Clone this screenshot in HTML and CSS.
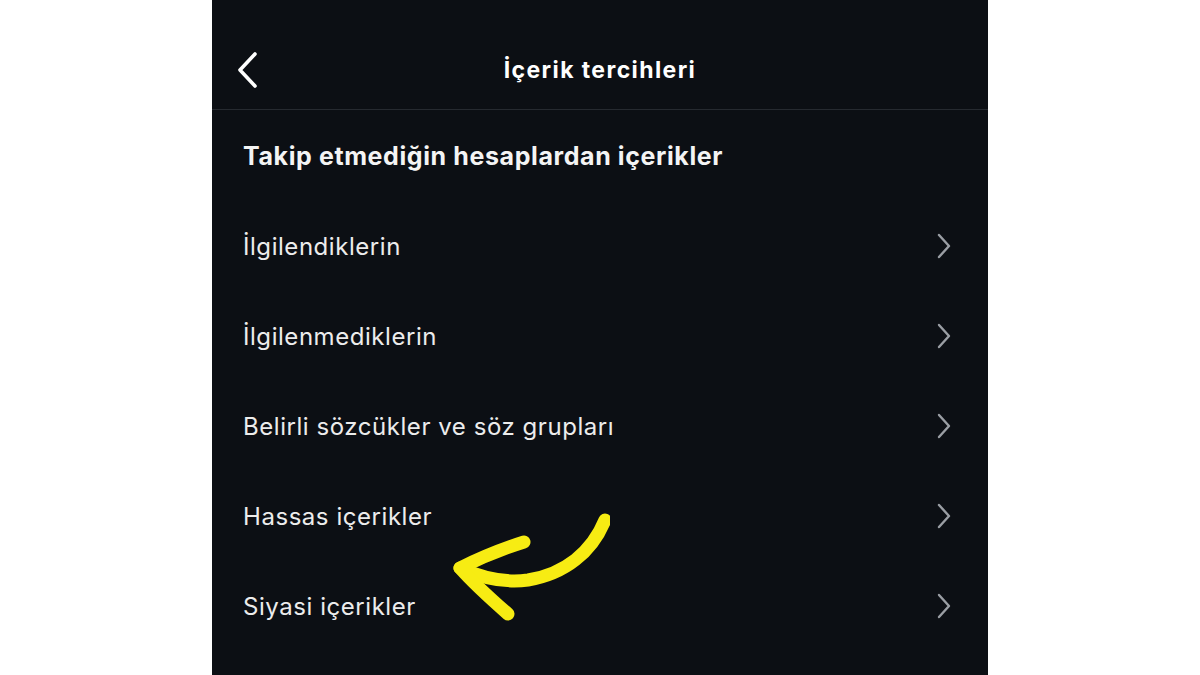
FILE: index.html
```html
<!DOCTYPE html>
<html lang="tr">
<head>
<meta charset="utf-8">
<link rel="stylesheet" href="styles.css">
</head>
<body>
<div class="page">
  <div class="phone">
    <header class="topbar">
      <svg class="back" width="26" height="40" viewBox="0 0 26 40"><path d="M20 4 L5 20 L20 36" fill="none" stroke="#fff" stroke-width="3.6" stroke-linecap="round" stroke-linejoin="round"/></svg>
      <h1 class="title">İçerik tercihleri</h1>
    </header>
    <div class="section">Takip etmediğin hesaplardan içerikler</div>
    <ul class="list">
      <li class="row"><span>İlgilendiklerin</span><svg class="chev" width="16" height="26" viewBox="0 0 16 26"><path d="M3 2 L13 13 L3 24" fill="none" stroke="#9a9ea4" stroke-width="2.4" stroke-linecap="round" stroke-linejoin="round"/></svg></li>
      <li class="row"><span>İlgilenmediklerin</span><svg class="chev" width="16" height="26" viewBox="0 0 16 26"><path d="M3 2 L13 13 L3 24" fill="none" stroke="#9a9ea4" stroke-width="2.4" stroke-linecap="round" stroke-linejoin="round"/></svg></li>
      <li class="row"><span>Belirli sözcükler ve söz grupları</span><svg class="chev" width="16" height="26" viewBox="0 0 16 26"><path d="M3 2 L13 13 L3 24" fill="none" stroke="#9a9ea4" stroke-width="2.4" stroke-linecap="round" stroke-linejoin="round"/></svg></li>
      <li class="row"><span>Hassas içerikler</span><svg class="chev" width="16" height="26" viewBox="0 0 16 26"><path d="M3 2 L13 13 L3 24" fill="none" stroke="#9a9ea4" stroke-width="2.4" stroke-linecap="round" stroke-linejoin="round"/></svg></li>
      <li class="row"><span>Siyasi içerikler</span><svg class="chev" width="16" height="26" viewBox="0 0 16 26"><path d="M3 2 L13 13 L3 24" fill="none" stroke="#9a9ea4" stroke-width="2.4" stroke-linecap="round" stroke-linejoin="round"/></svg></li>
      <li class="row"><span>Önerilen içerikler</span><svg class="chev" width="16" height="26" viewBox="0 0 16 26"><path d="M3 2 L13 13 L3 24" fill="none" stroke="#9a9ea4" stroke-width="2.4" stroke-linecap="round" stroke-linejoin="round"/></svg></li>
    </ul>
    <svg class="arrow" width="180" height="130" viewBox="430 500 180 130">
      <path d="M605 520 C592 552 565 574 528 580 C506 583 482 578 460 568" fill="none" stroke="#f7ec13" stroke-width="13" stroke-linecap="round" stroke-linejoin="round"/>
      <path d="M524 542 C505 548 480 558 460 568 C475 585 492 600 508 614" fill="none" stroke="#f7ec13" stroke-width="13" stroke-linecap="round" stroke-linejoin="round"/>
    </svg>
  </div>
</div>
</body>
</html>
```
FILE: styles.css
```css
* { box-sizing: border-box; }
html, body { margin: 0; padding: 0; background: #fff; }
body { font-family: Inter, "Noto Sans", "Liberation Sans", sans-serif; }
.page { width: 1200px; height: 675px; overflow: hidden; display: flex; justify-content: center; }
.phone {
  position: relative;
  width: 776px;
  height: 675px;
  background: #0c0f14;
  color: #f2f2f2;
  overflow: hidden;
}
.topbar {
  position: relative;
  height: 110px;
  border-bottom: 1px solid #262a30;
  display: flex;
  align-items: center;
  justify-content: center;
}
.back { position: absolute; left: 23px; top: 50px; }
.title { margin: 0; font-size: 23px; font-weight: 700; color: #fff; letter-spacing: 1.4px; padding-top: 30px; }
.section {
  padding: 31px 31px 0 31px;
  font-size: 25px;
  font-weight: 700;
  color: #f4f4f4;
  line-height: 30px;
  letter-spacing: 0.6px;
}
.list { list-style: none; margin: 0; padding: 30px 0 0 0; }
.row {
  height: 90px;
  display: flex;
  align-items: center;
  justify-content: space-between;
  padding: 0 36px 0 31px;
  font-size: 24px;
  font-weight: 400;
  color: #ececec;
  letter-spacing: 0.55px;
}
.chev { display: block; }
.arrow { position: absolute; left: 218px; top: 500px; }
```
